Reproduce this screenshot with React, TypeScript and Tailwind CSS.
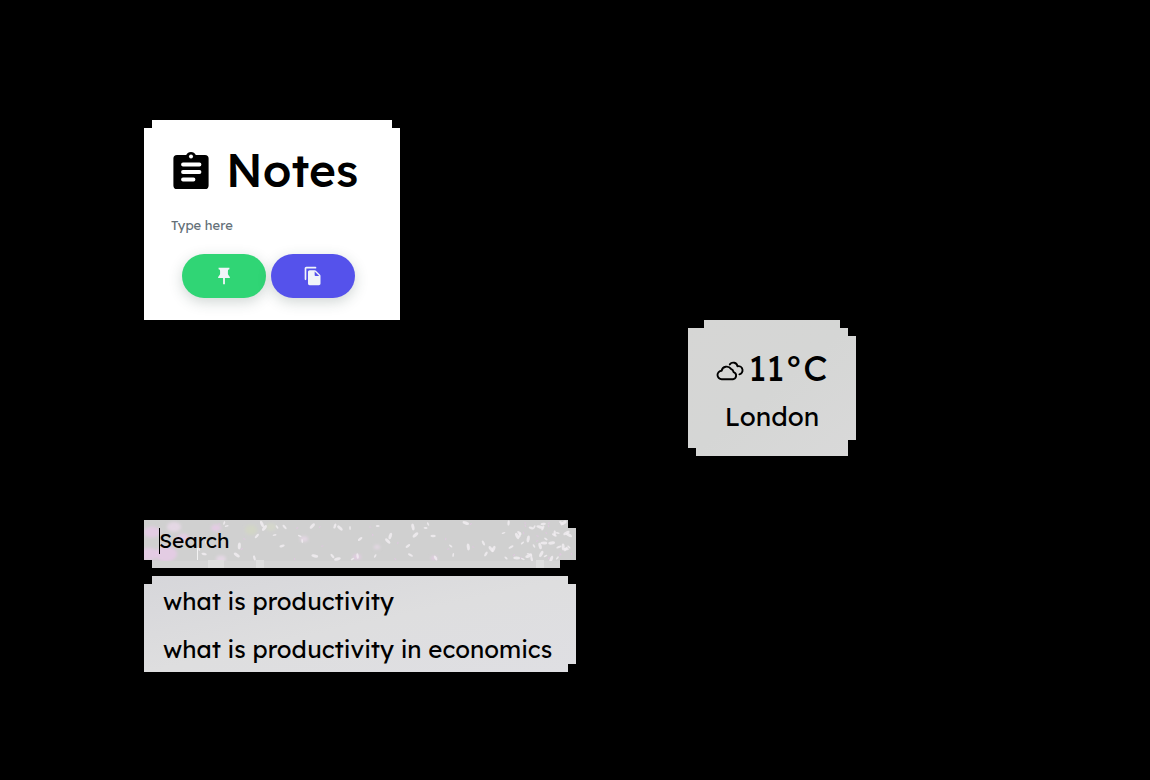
import React from "react";

const font = "font-['Lexend','Lato',sans-serif]";

function ClipboardIcon() {
  return (
    <svg viewBox="0 0 36 38" className="h-[38px] w-9 shrink-0" aria-hidden="true">
      <path
        fill="#000"
        d="M4 4h9.200a5.300 5.300 0 0 1 9.600 0H32a3.600 3.600 0 0 1 3.600 3.600V34.400a3.600 3.600 0 0 1-3.600 3.600H4A3.600 3.600 0 0 1 .4 34.400V7.600A3.600 3.600 0 0 1 4 4z"
      />
      <circle cx="18" cy="5.500" r="2" fill="#fff" />
      <path d="M10 13.500h16.500M10 21h16.500M10 28.500h10.500" stroke="#fff" strokeWidth="3.800" strokeLinecap="round" />
    </svg>
  );
}

function PinIcon() {
  return (
    <svg viewBox="0 0 24 24" className="size-5" fill="#f1f5f9" aria-hidden="true">
      <path d="M5.500 2h13v2c-1.200.2-1.800.8-1.800 2v3.500c0 1.400 2.500 2.300 2.500 5H13.100v7.500h-2.200v-7.500H4.800c0-2.700 2.500-3.600 2.500-5V6c0-1.200-.6-1.800-1.800-2z" />
    </svg>
  );
}

function CopyIcon() {
  return (
    <svg viewBox="0 0 24 24" className="size-5" fill="#f1f5f9" aria-hidden="true">
      <path d="M15 1H4c-1.100 0-2 .9-2 2v13a1 1 0 0 0 2 0V3h11a1 1 0 0 0 0-2zM15.600 5.600l4.800 4.800c.4.400.6.900.6 1.400V21c0 1.100-.9 2-2 2H8c-1.100 0-2-.9-2-2V7c0-1.100.9-2 2-2h6.200c.5 0 1 .2 1.400.6zM15 12h4.500L14 6.500V11c0 .550.450 1 1 1z" />
    </svg>
  );
}

function CloudsIcon() {
  return (
    <svg
      viewBox="0 0 28 20"
      className="mt-1.5 h-5 w-7 shrink-0"
      fill="none"
      stroke="#000"
      strokeWidth="1.900"
      strokeLinecap="round"
      strokeLinejoin="round"
      aria-hidden="true"
    >
      <path d="M5.800 18.200a4.200 4.200 0 0 1-.2-8.400A5.200 5.200 0 0 1 15 7.900a4.200 4.200 0 0 1 2.600 3.200 3.700 3.700 0 0 1-.3 7.100z" />
      <path d="M13.800 3.400a4.300 4.300 0 0 1 7.700 1.900 4.100 4.100 0 0 1 1.900 8" />
    </svg>
  );
}

const specks = Array.from({ length: 120 }, (_, i) => {
  const a = (i * 73 + 29) % 151;
  const b = (i * 47 + i * i * 13) % 37;
  const edge = i % 3 === 0;
  return {
    x: edge ? 370 + (a / 151) * 58 : 50 + (a / 151) * 380,
    y: 3 + b,
    r: 0.7 + (i % 4) * 0.4,
    angle: (i * 37) % 180,
    color: i % 4 === 0 ? "#e4c4e4" : "#f2eff3",
  };
});

const petals = [
  [8, 12, 8], [30, 7, 7], [22, 34, 11], [5, 34, 9], [77, 39, 5],
  [72, 8, 5], [39, 18, 6], [160, 19, 4], [213, 37, 4], [290, 38, 3], [233, 27, 3],
];

function Flowers() {
  return (
    <svg
      viewBox="0 0 432 48"
      preserveAspectRatio="none"
      className="pointer-events-none absolute inset-0 size-full"
      aria-hidden="true"
    >
      <defs>
        <filter id="soft">
          <feGaussianBlur stdDeviation="1.500" />
        </filter>
        <filter id="fine">
          <feGaussianBlur stdDeviation="0.700" />
        </filter>
      </defs>
      <g filter="url(#soft)">
        {petals.map(([x, y, r], i) => (
          <ellipse key={i} cx={x} cy={y} rx={r} ry={r * 0.7} fill={i % 3 === 1 ? "#ead9ea" : "#e8cbe9"} opacity="0.8" />
        ))}
        <ellipse cx="107" cy="10" rx="6" ry="5" fill="#d2d6c6" />
        <ellipse cx="127" cy="7" rx="5" ry="4" fill="#d4d7cb" />
      </g>
      <g filter="url(#fine)">
        {specks.map((s, i) => (
          <ellipse
            key={i}
            cx={s.x}
            cy={s.y}
            rx={s.r * 1.8}
            ry={s.r * 0.8}
            fill={s.color}
            opacity="0.8"
            transform={`rotate(${s.angle} ${s.x} ${s.y})`}
          />
        ))}
      </g>
      <path d="M0 41h432v7H0z" fill="#d4d4d4" />
      <path d="M392 40h8v8h-8zM112 40h8v8h-8zM64 40h16v8H64z" fill="#dedede" />
      <path d="M53.500 28v12" stroke="#f3f3f3" />
    </svg>
  );
}

function Notes() {
  return (
    <section className="w-64 bg-white pt-[26px] pb-[22px] [clip-path:polygon(8px_0,calc(100%_-_8px)_0,calc(100%_-_8px)_8px,100%_8px,100%_100%,0_100%,0_8px,8px_8px)]">
      <h1 className="flex items-center gap-[17px] pl-[29px] text-[46px] leading-[48px] font-medium">
        <ClipboardIcon />
        <span>Notes</span>
      </h1>
      <input
        aria-label="Note"
        placeholder="Type here"
        className="mt-[19px] block h-6 w-full bg-transparent px-[27px] text-[13px] leading-6 outline-none placeholder:text-[#647078]"
      />
      <div className="mt-[17px] flex gap-[5px] pl-[38px]">
        <button
          type="button"
          aria-label="Pin note"
          className="flex h-11 w-[84px] items-center justify-center rounded-full bg-[#30d575] shadow-[0_4px_14px_rgba(40,70,60,0.22)]"
        >
          <PinIcon />
        </button>
        <button
          type="button"
          aria-label="Copy note"
          className="flex h-11 w-[84px] items-center justify-center rounded-full bg-[#5552eb] shadow-[0_4px_14px_rgba(40,70,60,0.22)]"
        >
          <CopyIcon />
        </button>
      </div>
    </section>
  );
}

function Weather() {
  return (
    <section className="col-start-2 row-start-2 w-[168px] bg-linear-to-br from-[#d6d6d5] via-[#d5d6d5] to-[#d9d9d9] pt-6 pb-[21px] [clip-path:polygon(16px_0,152px_0,152px_8px,160px_8px,160px_16px,168px_16px,168px_120px,160px_120px,160px_136px,8px_136px,8px_128px,0_128px,0_8px,16px_8px)]">
      <div className="flex items-center justify-center gap-1">
        <CloudsIcon />
        <span className="text-4xl leading-[48px]">11°C</span>
      </div>
      <p className="pt-[7px] text-center text-[26px] leading-9">London</p>
    </section>
  );
}

function Search() {
  return (
    <section className="col-span-2 mt-16 w-[432px]">
      <div className="relative bg-[#d0d0d0] [clip-path:polygon(0_0,424px_0,424px_8px,432px_8px,432px_40px,416px_40px,416px_48px,8px_48px,8px_40px,0_40px)]">
        <Flowers />
        <div className="relative flex h-12 items-center pb-1.5 pl-[15px]">
          <label className="flex items-center border-l border-black">
            <input
              aria-label="Search"
              placeholder="Search"
              className="-ml-px h-[26px] w-96 bg-transparent text-[21px] outline-none placeholder:text-black"
            />
          </label>
        </div>
      </div>
      <ul className="mt-2 bg-linear-to-br from-[#d6d6da] via-[#dededf] to-[#dfdfe3] text-2xl [clip-path:polygon(8px_0,424px_0,424px_8px,432px_8px,432px_88px,424px_88px,424px_96px,0_96px,0_8px,8px_8px)]">
        <li>
          <a href="#productivity" className="block pt-0.5 pl-[19px] leading-[46px]">what is productivity</a>
        </li>
        <li>
          <a href="#economics" className="block pt-0.5 pl-[19px] leading-[46px]">what is productivity in economics</a>
        </li>
      </ul>
    </section>
  );
}

export default function App() {
  return (
    <main className={`${font} grid min-h-screen grid-cols-[544px_1fr] content-start bg-black pt-[120px] pl-36 text-black`}>
      <Notes />
      <Weather />
      <Search />
    </main>
  );
}
